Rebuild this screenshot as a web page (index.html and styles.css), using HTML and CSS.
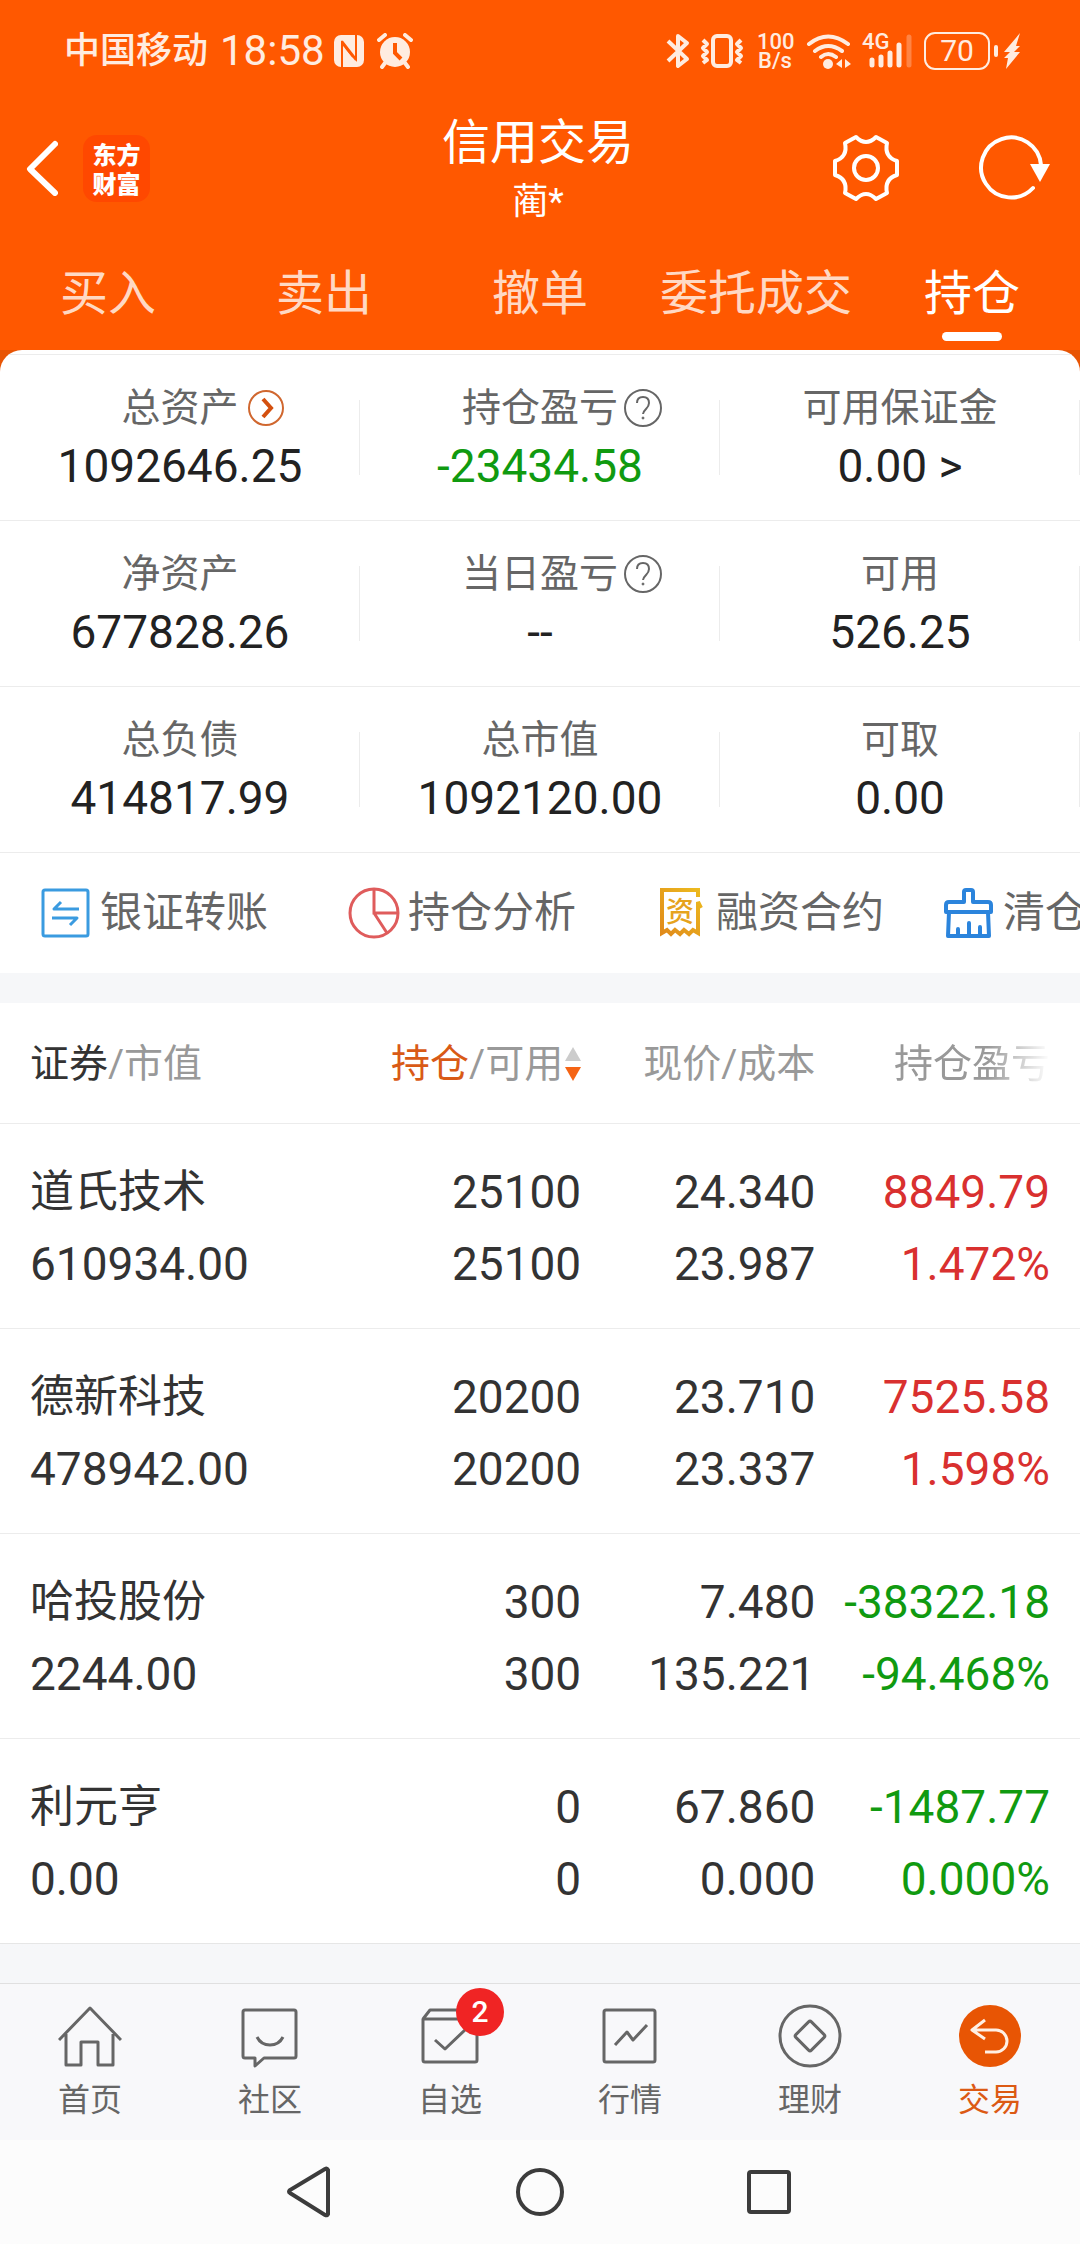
FILE: index.html
```html
<!DOCTYPE html>
<html lang="zh-CN">
<head>
<meta charset="utf-8">
<meta name="viewport" content="width=device-width, initial-scale=1">
<title>信用交易</title>
<link rel="stylesheet" href="styles.css">
</head>
<body>
<header class="top">
  <div class="status">
    <div class="status-left">
      <span class="carrier">中国移动</span>
      <span class="clock">18:58</span>
      <svg class="nfc" width="32" height="34" viewBox="0 0 32 34" aria-hidden="true">
        <rect x="1" y="1" width="30" height="32" rx="7" fill="currentColor"/>
        <path d="M9 33V9l14 17M23 1v24L9 7" fill="none" stroke="#ff5800" stroke-width="2"/>
        <path d="M13 14l7 9" stroke="#ff5800" stroke-width="2"/>
      </svg>
      <svg class="alarm" width="36" height="36" viewBox="0 0 36 36" aria-hidden="true">
        <circle cx="18" cy="19" r="15" fill="currentColor"/>
        <path d="M2 7l6-5M34 7l-6-5M8 30l-3 4M28 30l3 4" stroke="currentColor" stroke-width="4" stroke-linecap="round"/>
        <path d="M18 10v10l6 6" fill="none" stroke="#ff5800" stroke-width="4"/>
      </svg>
    </div>
    <div class="status-right">
      <svg width="24" height="36" viewBox="0 0 24 36" fill="none" stroke="currentColor" stroke-width="4" stroke-linejoin="round" aria-hidden="true">
        <path d="M2 8l19 18-9 7V3l9 7L2 28"/>
      </svg>
      <svg class="vibrate" width="44" height="36" viewBox="0 0 44 36" fill="none" stroke="currentColor" stroke-width="4" stroke-linejoin="round" aria-hidden="true">
        <rect x="13" y="3" width="18" height="30" rx="4"/>
        <path d="M3 7l4 4-4 4 4 4-4 4 4 4-4 3M41 7l-4 4 4 4-4 4 4 4-4 4 4 3"/>
      </svg>
      <span class="speed"><span>100</span><span>B/s</span></span>
      <svg class="wifi" width="46" height="36" viewBox="0 0 46 36" fill="none" stroke="currentColor" stroke-width="4" stroke-linecap="round" aria-hidden="true">
        <path d="M3 11q19-15 39 0M9 18q13-10 27 0M15 24q7-6 15 0"/>
        <circle cx="22" cy="31" r="5" fill="currentColor" stroke="none"/>
        <path d="M36 26v9l-6-4zM39 26v9l6-4z" fill="currentColor" stroke="none"/>
      </svg>
      <span class="signal">
        <span class="net">4G</span>
        <svg width="44" height="36" viewBox="0 0 44 36" fill="none" stroke="currentColor" stroke-width="5" stroke-linecap="round" aria-hidden="true">
          <path d="M3 27v5M12 24v8M21 20v12M30 12v20"/>
          <path d="M40 4v28" opacity=".3"/>
        </svg>
      </span>
      <span class="battery">70</span>
      <svg class="bolt" width="28" height="38" viewBox="0 0 28 38" fill="currentColor" aria-hidden="true">
        <rect x="0" y="13" width="4" height="12" rx="2"/>
        <path d="M26 1L10 20h6l-6 6h4l-2 11 14-17h-6l6-6h-4z"/>
      </svg>
    </div>
  </div>

  <div class="bar">
    <div class="bar-left">
      <button class="icon-btn" aria-label="返回">
        <svg width="32" height="56" viewBox="0 0 32 56" fill="none" stroke="currentColor" stroke-width="6" stroke-linecap="round" stroke-linejoin="round"><path d="M29 4L4 29l25 24"/></svg>
      </button>
      <a class="logo" href="#"><span>东方</span><span>财富</span></a>
    </div>
    <div class="bar-title">
      <h1>信用交易</h1>
      <p>蔺*</p>
    </div>
    <div class="bar-right">
      <button class="icon-btn" aria-label="设置">
        <svg width="68" height="68" viewBox="-34 -34 68 68" fill="none" stroke="currentColor" stroke-width="4" stroke-linejoin="round">
          <path d="M-10-31Q0-21 10-31L21-25Q18-11 31-7L31 7Q18 11 21 25L10 31Q0 21-10 31L-21 25Q-18 11-31 7L-31-7Q-18-11-21-25Z"/>
          <circle r="12"/>
        </svg>
      </button>
      <button class="icon-btn" aria-label="刷新">
        <svg width="72" height="68" viewBox="-33 -34 72 68" fill="none" stroke="currentColor" stroke-width="4">
          <path d="M22 20A30 30 0 1 1 30-3" stroke-linecap="round"/>
          <path d="M19-4h20L29 14z" fill="currentColor" stroke="none"/>
        </svg>
      </button>
    </div>
  </div>

  <nav class="tabs">
    <a href="#">买入</a>
    <a href="#">卖出</a>
    <a href="#">撤单</a>
    <a href="#">委托成交</a>
    <a href="#" class="is-active" aria-current="page">持仓</a>
  </nav>
</header>

<main>
  <section class="sheet">
    <div class="summary">
      <dl class="stats">
        <div class="stat">
          <dt>总资产<svg class="more" width="38" height="38" viewBox="0 0 38 38" fill="none"><circle cx="19" cy="19" r="17" stroke="#d0672f" stroke-width="2"/><path d="M16 10l8 9-8 9" stroke="#d4500f" stroke-width="4"/></svg></dt>
          <dd>1092646.25</dd>
        </div>
        <div class="stat">
          <dt>持仓盈亏<svg class="help" width="38" height="38" viewBox="0 0 38 38" fill="none" stroke="#666" stroke-width="2"><circle cx="19" cy="19" r="18"/><path d="M13 14q0-6 6-6t6 6q0 3-3 6t-3 5"/><circle cx="19" cy="29" r="1" fill="#666" stroke-width="1"/></svg></dt>
          <dd class="down">-23434.58</dd>
        </div>
        <div class="stat">
          <dt>可用保证金</dt>
          <dd>0.00 &gt;</dd>
        </div>
        <div class="stat">
          <dt>净资产</dt>
          <dd>677828.26</dd>
        </div>
        <div class="stat">
          <dt>当日盈亏<svg class="help" width="38" height="38" viewBox="0 0 38 38" fill="none" stroke="#666" stroke-width="2"><circle cx="19" cy="19" r="18"/><path d="M13 14q0-6 6-6t6 6q0 3-3 6t-3 5"/><circle cx="19" cy="29" r="1" fill="#666" stroke-width="1"/></svg></dt>
          <dd>--</dd>
        </div>
        <div class="stat">
          <dt>可用</dt>
          <dd>526.25</dd>
        </div>
        <div class="stat">
          <dt>总负债</dt>
          <dd>414817.99</dd>
        </div>
        <div class="stat">
          <dt>总市值</dt>
          <dd>1092120.00</dd>
        </div>
        <div class="stat">
          <dt>可取</dt>
          <dd>0.00</dd>
        </div>
      </dl>

      <div class="actions">
        <button class="action">
          <svg width="52" height="52" viewBox="0 0 52 52" fill="none" stroke="#3a9be0" stroke-width="3" stroke-linejoin="round"><rect x="3" y="3" width="45" height="46" rx="2"/><path d="M39 22H14l7-7M12 31h25l-7 7"/></svg>
          <span>银证转账</span>
        </button>
        <button class="action">
          <svg width="52" height="52" viewBox="0 0 52 52" fill="none" stroke="#df5c5c" stroke-width="3"><circle cx="26" cy="26" r="24"/><path d="M26 2v24h24M26 26l13 20"/></svg>
          <span>持仓分析</span>
        </button>
        <button class="action">
          <svg width="52" height="52" viewBox="0 0 52 52" fill="none">
            <defs><linearGradient id="gold" x1="0" y1="1" x2="1" y2="0"><stop offset="0" stop-color="#e08a1a"/><stop offset="1" stop-color="#edbb1f"/></linearGradient></defs>
            <path d="M42 10V3H6v43l5-3 4 4 4-4 5 4 4-4 5 4 4-4 5 3V15l3 6" stroke="url(#gold)" stroke-width="4"/>
            <text class="stamp" x="24" y="35" text-anchor="middle" fill="#e6a31d">资</text>
          </svg>
          <span>融资合约</span>
        </button>
        <button class="action action--wide">
          <svg width="52" height="52" viewBox="0 0 52 52" fill="none" stroke="#2b84dc" stroke-width="4" stroke-linecap="round" stroke-linejoin="round"><path d="M21 15V5q0-2 2-2h5q2 0 2 2v10h15q3 0 3 3v7H3v-7q0-3 3-3zM6 25L5 49h41l-1-24M15 42v7M26 36v13M37 40v9"/></svg>
          <span>清仓</span>
        </button>
      </div>
    </div>
  </section>

  <section class="holdings">
    <table>
      <colgroup><col class="c-name"><col class="c-pos"><col class="c-price"><col class="c-pl"></colgroup>
      <thead>
        <tr>
          <th scope="col"><b>证券</b>/市值</th>
          <th scope="col"><button class="sort"><span><b class="sorted">持仓</b>/可用</span><svg width="16" height="36" viewBox="0 0 16 36"><path d="M8 1l8 14H0z" fill="#ccc"/><path d="M8 35l8-14H0z" fill="#f56414"/></svg></button></th>
          <th scope="col">现价/成本</th>
          <th scope="col"><span class="fade">持仓盈亏</span></th>
        </tr>
      </thead>
      <tbody>
        <tr>
          <td><span class="name">道氏技术</span><span>610934.00</span></td>
          <td><span>25100</span><span>25100</span></td>
          <td><span>24.340</span><span>23.987</span></td>
          <td class="up"><span>8849.79</span><span>1.472%</span></td>
        </tr>
        <tr>
          <td><span class="name">德新科技</span><span>478942.00</span></td>
          <td><span>20200</span><span>20200</span></td>
          <td><span>23.710</span><span>23.337</span></td>
          <td class="up"><span>7525.58</span><span>1.598%</span></td>
        </tr>
        <tr>
          <td><span class="name">哈投股份</span><span>2244.00</span></td>
          <td><span>300</span><span>300</span></td>
          <td><span>7.480</span><span>135.221</span></td>
          <td class="down"><span>-38322.18</span><span>-94.468%</span></td>
        </tr>
        <tr>
          <td><span class="name">利元亨</span><span>0.00</span></td>
          <td><span>0</span><span>0</span></td>
          <td><span>67.860</span><span>0.000</span></td>
          <td class="down"><span>-1487.77</span><span>0.000%</span></td>
        </tr>
      </tbody>
    </table>
  </section>
</main>

<nav class="dock">
  <a href="#">
    <svg width="64" height="64" viewBox="0 0 64 64"><path d="M1 36L32 4l31 32M8 30v31h15V38h17v23h15V30"/></svg>
    <span>首页</span>
  </a>
  <a href="#">
    <svg width="64" height="64" viewBox="0 0 64 64"><path d="M7 6h49q2 0 2 2v44q0 2-2 2H26l-9 8v-8H7q-2 0-2-2V8q0-2 2-2zM19 33q4 8 13 8t13-8"/></svg>
    <span>社区</span>
  </a>
  <a href="#">
    <svg width="64" height="64" viewBox="0 0 64 64"><path d="M5 15l7-9h40l7 9M5 15h54v41q0 2-2 2H7q-2 0-2-2zM17 36l10 9 21-20"/></svg>
    <span>自选</span>
    <i class="badge">2</i>
  </a>
  <a href="#">
    <svg width="64" height="64" viewBox="0 0 64 64"><rect x="6" y="6" width="51" height="52" rx="2"/><path d="M17 41l12-13 6 8 14-15"/></svg>
    <span>行情</span>
  </a>
  <a href="#">
    <svg width="64" height="64" viewBox="0 0 64 64"><circle cx="32" cy="32" r="30"/><rect x="21" y="21" width="22" height="22" rx="2" transform="rotate(45 32 32)"/></svg>
    <span>理财</span>
  </a>
  <a href="#" class="is-active" aria-current="page">
    <svg width="64" height="64" viewBox="0 0 64 64"><circle cx="32" cy="32" r="31" fill="#e85504" stroke="none"/><path class="arrow" d="M27 16L14 26l13 9M14 26h24a11 11 0 0 1 0 22H27"/></svg>
    <span>交易</span>
  </a>
</nav>

<nav class="system">
  <button class="icon-btn" aria-label="后退"><svg width="48" height="52" viewBox="0 0 48 52"><path d="M42 4v44q-1 2-3 1L4 27q-2-1 0-3L39 3q2-1 3 1z"/></svg></button>
  <button class="icon-btn" aria-label="主屏幕"><svg width="52" height="52" viewBox="0 0 52 52"><circle cx="26" cy="26" r="22"/></svg></button>
  <button class="icon-btn" aria-label="最近任务"><svg width="48" height="52" viewBox="0 0 48 52"><rect x="3" y="6" width="40" height="40" rx="2"/></svg></button>
</nav>
</body>
</html>
```

FILE: styles.css
```css
* { box-sizing: border-box; }

body {
  margin: 0;
  min-height: 100vh;
  display: flex;
  flex-direction: column;
  background: #f6f7f9;
  color: #222;
  font-family: Roboto, "Noto Sans CJK SC", sans-serif;
  overflow-x: hidden;
}

button {
  padding: 0;
  border: 0;
  background: none;
  color: inherit;
  font: inherit;
}

a { color: inherit; text-decoration: none; }
svg { display: block; flex: none; }
h1, p, dl, dd { margin: 0; }
b { font-weight: 400; }
.up { color: #d9302f; }
.down { color: #109a10; }
.icon-btn { display: flex; }

/* Header */
.top { background: #ff5800; color: #fff; }

.status {
  height: 102px;
  padding: 0 58px 0 64px;
  display: flex;
  align-items: center;
  justify-content: space-between;
  color: #ffece0;
}
.status-left, .status-right { display: flex; align-items: center; }
.carrier { font-size: 36px; line-height: 48px; font-weight: 500; }
.clock { margin-left: 12px; font-size: 42px; line-height: 48px; }
.nfc { margin-left: 8px; }
.alarm { margin-left: 12px; }
.vibrate { margin-left: 10px; }
.speed {
  width: 36px;
  margin-left: 13px;
  display: flex;
  flex-direction: column;
  font-size: 22px;
  font-weight: 500;
  line-height: 19px;
  text-align: center;
}
.wifi { margin-left: 13px; }
.signal { position: relative; margin-left: 17px; }
.net {
  position: absolute;
  left: -7px;
  top: 0;
  font-size: 22px;
  line-height: 18px;
  font-weight: 500;
}
.battery {
  width: 66px;
  height: 38px;
  margin-left: 11px;
  border: 2px solid currentColor;
  border-radius: 11px;
  font-size: 30px;
  line-height: 34px;
  text-align: center;
}
.bolt { margin-left: 4px; }

.bar {
  height: 132px;
  padding: 0 30px 0 26px;
  display: grid;
  grid-template-columns: 1fr auto 1fr;
  align-items: center;
}
.bar-left { display: flex; align-items: center; gap: 25px; }
.bar-right { display: flex; justify-content: flex-end; gap: 78px; }
.logo {
  width: 67px;
  height: 67px;
  padding: 4px 0;
  border-radius: 14px;
  background: #ff4800;
  display: flex;
  flex-direction: column;
  align-items: center;
  font: 900 24px/29px "Noto Sans CJK SC", sans-serif;
}
.bar-title { text-align: center; }
.bar-title h1 { font-size: 48px; line-height: 68px; font-weight: 400; }
.bar-title p { font-size: 36px; line-height: 50px; }

.tabs {
  display: grid;
  grid-template-columns: repeat(5, 1fr);
  padding-top: 4px;
  font-size: 48px;
  line-height: 112px;
  text-align: center;
  color: #ffd9c4;
}
.tabs .is-active { position: relative; color: #fff; }
.tabs .is-active::after {
  content: "";
  position: absolute;
  left: calc(50% - 30px);
  bottom: 9px;
  width: 60px;
  height: 9px;
  border-radius: 5px;
  background: #fff;
}

/* Account summary */
main { flex: 1; }
.sheet { background: linear-gradient(#e85504 40px, #fff 40px); }
.summary {
  padding-top: 4px;
  border-radius: 22px 22px 0 0;
  background: #fff;
  overflow: hidden;
}
.stats { display: grid; grid-template-columns: repeat(3, 1fr); }
.stat {
  padding: 28px 0 21px;
  border-top: 1px solid #ececec;
  background: linear-gradient(#ececec, #ececec) right 45px / 1px 75px no-repeat;
  text-align: center;
}
.stat dt {
  display: flex;
  justify-content: center;
  align-items: center;
  font-size: 39px;
  line-height: 50px;
  color: #666;
}
/* The trailing icons hang outside the centred label */
.more { margin: 0 -46px 0 8px; }
.help { margin: 0 -44px 0 6px; }
.stat dd { font-size: 46px; line-height: 66px; }

.actions {
  display: flex;
  height: 121px;
  border-top: 1px solid #ececec;
  overflow: hidden;
  color: #666;
}
.action {
  flex: none;
  width: 308px;
  padding-left: 40px;
  display: flex;
  align-items: center;
  gap: 8px;
  font-size: 42px;
  line-height: 60px;
  white-space: nowrap;
}
.action--wide { padding-left: 19px; }
.stamp { font: 500 28px "Noto Sans CJK SC", sans-serif; }

/* Holdings */
.holdings { margin-top: 30px; background: #fff; border-bottom: 1px solid #e6e6e6; }
table { width: 100%; border-collapse: collapse; table-layout: fixed; }
.c-name { width: 27%; }
.c-pos { width: 27%; }
.c-price { width: 21.5%; }
th {
  height: 120px;
  padding: 2px 0 0;
  font-size: 39px;
  font-weight: 400;
  line-height: 50px;
  text-align: right;
  color: #999;
}
th:first-child, td:first-child { padding-left: 30px; text-align: left; }
th:nth-child(2), td:nth-child(2) { padding-right: 2px; }
th:last-child, td:last-child { padding-right: 30px; }
th b { color: #333; }
th .sorted { color: #d95a16; }
.sort { display: flex; width: 100%; justify-content: flex-end; align-items: center; gap: 2px; }
.fade {
  -webkit-mask-image: linear-gradient(to right, #000 60%, transparent);
  mask-image: linear-gradient(to right, #000 60%, transparent);
}
td {
  padding: 32px 0 28px;
  border-top: 1px solid #ececec;
  font-size: 46px;
  line-height: 72px;
  text-align: right;
}
td:not(.up):not(.down) { color: #333; }
td span { display: block; }
td .name { font-size: 44px; }

/* Bottom navigation */
.dock {
  display: grid;
  grid-template-columns: repeat(6, 1fr);
  padding: 20px 0 16px;
  border-top: 1px solid #e0e0e0;
  background: #f8f8fa;
  color: #666;
  font-size: 32px;
  line-height: 48px;
}
.dock a {
  position: relative;
  display: flex;
  flex-direction: column;
  align-items: center;
  gap: 8px;
}
.dock svg {
  fill: none;
  stroke: currentColor;
  stroke-width: 3;
  stroke-linejoin: round;
}
.dock .arrow { stroke: #fff0e4; }
.dock .is-active { color: #dc5a14; }
.badge {
  position: absolute;
  left: calc(50% + 6px);
  top: -16px;
  width: 48px;
  height: 48px;
  border-radius: 50%;
  background: #f02424;
  color: #fff;
  font-size: 30px;
  font-style: normal;
  font-weight: 500;
  text-align: center;
}

.system {
  height: 104px;
  display: flex;
  justify-content: center;
  align-items: center;
  gap: 180px;
  background: #fcfcfc;
}
.system svg { fill: none; stroke: #3c3c3c; stroke-width: 4; }
```
